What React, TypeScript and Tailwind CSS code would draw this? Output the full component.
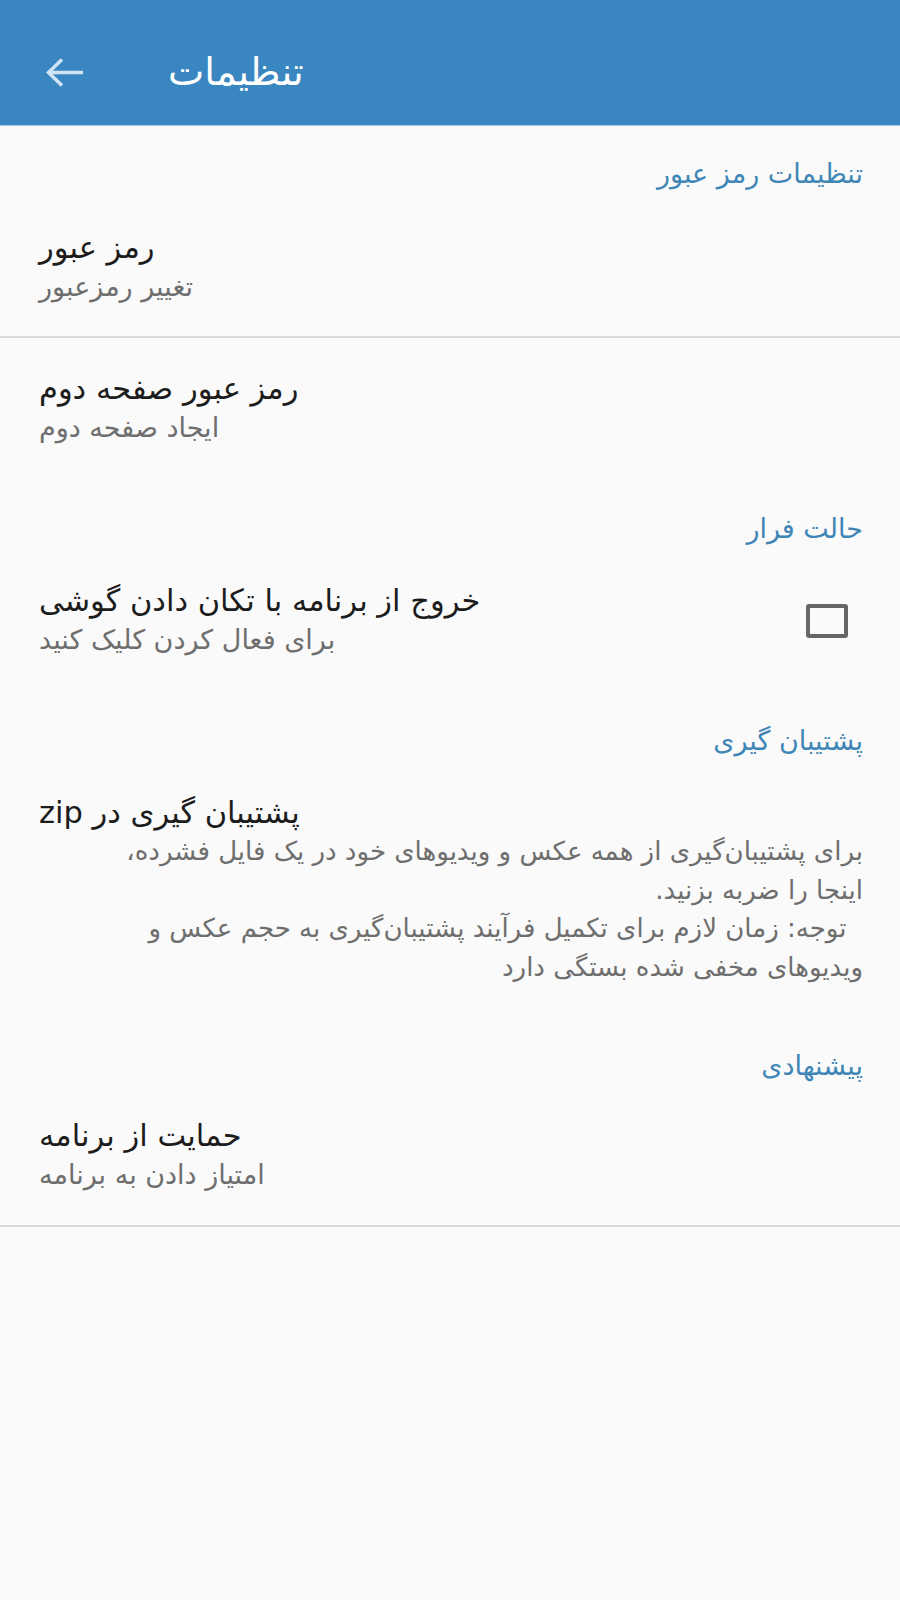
import React from "react";

const FONT = "font-['DejaVu_Sans','Noto_Sans',sans-serif]";

function Category({ text, pt }: { text: string; pt: string }) {
  return (
    <div className={`${pt} pr-[37px] flex justify-end`}>
      <div dir="rtl" className="text-[27px] leading-[38px] text-[#3f86b6]">
        {text}
      </div>
    </div>
  );
}

function Title({ text }: { text: string }) {
  return (
    <div dir="rtl" className="text-[30.5px] leading-[38px] text-[#1c1c1c]">
      {text}
    </div>
  );
}

function Sub({ text }: { text: string }) {
  return (
    <div dir="rtl" className="text-[27px] leading-[40px] text-[#6e6e6e]">
      {text}
    </div>
  );
}

export default function App() {
  return (
    <div className={`w-[900px] h-[1600px] bg-[#fafafa] ${FONT}`}>
      <div className="h-[126px] bg-[#3986c0] flex items-start border-b border-[#a9cde8]">
        <div className="mt-[58px] ml-[46px] w-[37px] h-[29px]">
          <svg width="37" height="29" viewBox="0 0 37 29" fill="none">
            <path
              d="M3 14.5H37M16 1.5L2.5 14.5L16 27.5"
              stroke="#cfe4f5"
              strokeWidth="3.6"
            />
          </svg>
        </div>
        <div dir="rtl" className="mt-[50px] ml-[85px] text-[38.5px] leading-[44px] text-white">
          تنظیمات
        </div>
      </div>

      <Category text="تنظیمات رمز عبور" pt="pt-[29px]" />

      <div className="pt-[36px] pb-[29px] pl-[39px] pr-[37px] flex flex-col items-start">
        <Title text="رمز عبور" />
        <Sub text="تغییر رمزعبور" />
      </div>
      <div className="h-[2px] bg-[#d9d9d9]" />

      <div className="pt-[32px] pl-[39px] pr-[37px] flex flex-col items-start">
        <Title text="رمز عبور صفحه دوم" />
        <Sub text="ایجاد صفحه دوم" />
      </div>

      <Category text="حالت فرار" pt="pt-[62px]" />

      <div className="pt-[34px] pl-[39px] pr-[52px] flex items-center justify-between">
        <div className="flex flex-col items-start">
          <Title text="خروج از برنامه با تکان دادن گوشی" />
          <Sub text="برای فعال کردن کلیک کنید" />
        </div>
        <div className="w-[42px] h-[34px] border-[4px] border-[#666666] rounded-[3px]" />
      </div>

      <Category text="پشتیبان گیری" pt="pt-[62px]" />

      <div className="pt-[34px] pl-[39px] pr-[37px] flex flex-col items-start">
        <Title text="پشتیبان گیری در zip" />
        <div dir="rtl" className="w-full text-[26px] leading-[38.5px] text-[#6e6e6e] whitespace-pre">
          <div>برای پشتیبان‌گیری از همه عکس و ویدیوهای خود در یک فایل فشرده،</div>
          <div>اینجا را ضربه بزنید.</div>
          <div>{"  توجه: زمان لازم برای تکمیل فرآیند پشتیبان‌گیری به حجم عکس و"}</div>
          <div>ویدیوهای مخفی شده بستگی دارد</div>
        </div>
      </div>

      <Category text="پیشنهادی" pt="pt-[61px]" />

      <div className="pt-[32px] pb-[30px] pl-[39px] pr-[37px] flex flex-col items-start">
        <Title text="حمایت از برنامه" />
        <Sub text="امتیاز دادن به برنامه" />
      </div>
      <div className="h-[2px] bg-[#d9d9d9]" />
    </div>
  );
}
